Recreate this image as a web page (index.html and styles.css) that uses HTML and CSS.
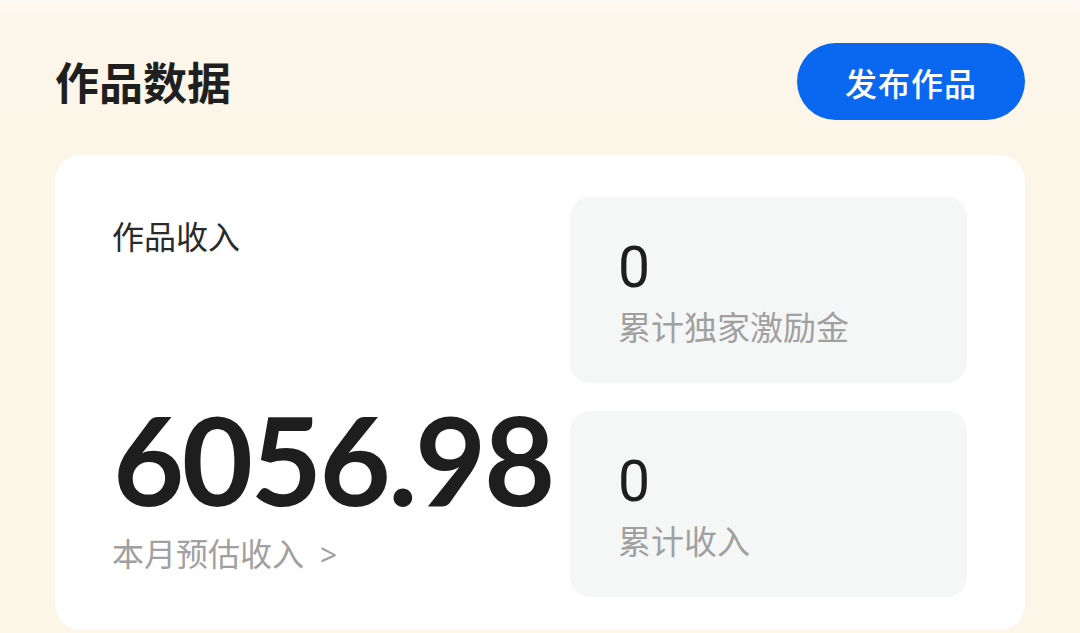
FILE: index.html
```html
<!DOCTYPE html>
<html lang="zh-CN">
<head>
<meta charset="utf-8">
<title>作品数据</title>
<link rel="stylesheet" href="styles.css">
</head>
<body>
<div class="page">
  <header class="header">
    <h1 class="title">作品数据</h1>
    <button class="publish">发布作品</button>
  </header>
  <section class="card">
    <div class="main">
      <div class="main-label">作品收入</div>
      <div class="main-bottom">
        <div class="big-num">6056.98</div>
        <div class="main-sub">本月预估收入<span class="arrow">&gt;</span></div>
      </div>
    </div>
    <div class="tiles">
      <div class="tile">
        <div class="tile-num">0</div>
        <div class="tile-label">累计独家激励金</div>
      </div>
      <div class="tile">
        <div class="tile-num">0</div>
        <div class="tile-label">累计收入</div>
      </div>
    </div>
  </section>
</div>
</body>
</html>
```
FILE: styles.css
```css
* { box-sizing: border-box; }
html, body {
  margin: 0;
  padding: 0;
  height: 100%;
}
body {
  background: linear-gradient(180deg, #fdfaf3 0px, #fcf6ea 20px, #fcf6e9 100%);
  font-family: "Noto Sans CJK SC", "Noto Sans", sans-serif;
  color: #222;
  overflow: hidden;
}
.page {
  padding: 43px 55px 0 55px;
}
.header {
  display: flex;
  align-items: center;
  justify-content: space-between;
  height: 77px;
}
.title {
  margin: 0;
  font-size: 44px;
  font-weight: 700;
  color: #1f1f1f;
  line-height: 1;
  margin-top: -2px;
}
.publish {
  width: 228px;
  height: 77px;
  border: none;
  border-radius: 39px;
  background: #0a68f0;
  color: #fff;
  font-family: "Noto Sans CJK SC", sans-serif;
  font-size: 32px;
  font-weight: 500;
  padding: 0;
  letter-spacing: 1px;
}
.card {
  margin-top: 35px;
  background: #fff;
  border-radius: 26px;
  height: 475px;
  padding: 42px 58px 33px 57px;
  display: flex;
  justify-content: space-between;
}
.main {
  display: flex;
  flex-direction: column;
  justify-content: space-between;
}
.main-label {
  font-size: 32px;
  color: #2a2a2a;
  line-height: 1;
  margin-top: 22px;
}
.big-num {
  font-family: "Lato", "Open Sans", sans-serif;
  font-weight: 700;
  font-size: 123px;
  line-height: 1;
  color: #1e1e1e;
  margin-left: 1px;
  letter-spacing: -2.5px;
}
.main-sub {
  margin-top: 16px;
  font-size: 32px;
  color: #a0a0a0;
  line-height: 1;
  margin-bottom: 27px;
}
.arrow {
  margin-left: 16px;
  font-family: "Noto Sans", sans-serif;
  font-size: 30px;
}
.tiles {
  width: 397px;
  display: flex;
  flex-direction: column;
  gap: 28px;
}
.tile {
  flex: 1;
  background: #f5f7f7;
  border-radius: 20px;
  padding: 42px 48px 0 48px;
}
.tile-num {
  font-family: "Roboto", "Noto Sans", sans-serif;
  font-size: 57px;
  line-height: 1;
  color: #1e1e1e;
}
.tile-label {
  margin-top: 14px;
  font-size: 33px;
  line-height: 1;
  color: #a0a0a0;
}
```
